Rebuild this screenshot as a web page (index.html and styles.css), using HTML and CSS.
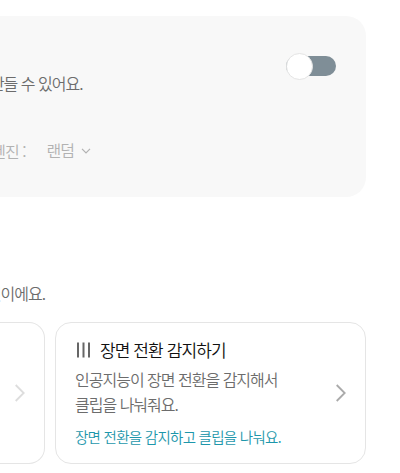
FILE: index.html
```html
<!DOCTYPE html>
<html lang="ko">
<head>
  <meta charset="UTF-8">
  <title>장면 전환 감지하기</title>
  <link rel="stylesheet" href="styles.css">
</head>
<body>

  <section class="panel">
    <div class="panel-text">
      <p class="panel-desc">만들 수 있어요.</p>
      <div class="engine">
        <span class="engine-label">엔진 :</span>
        <span class="engine-value">랜덤</span>
        <svg class="engine-arrow" width="10" height="6" viewBox="0 0 10 6"><path d="M1 .8l4 4 4-4"/></svg>
      </div>
    </div>
    <div class="toggle"><div class="knob"></div></div>
  </section>

  <p class="notice">것이에요.</p>

  <div class="cards">
    <div class="card card-prev">
      <svg class="arrow" width="11" height="18" viewBox="0 0 11 18"><path d="M1.7 1l8 8-8 8"/></svg>
    </div>
    <div class="card">
      <div class="card-body">
        <h2 class="card-title">
          <svg class="bars" width="15" height="16" viewBox="0 0 15 16"><path d="M3 .5v15M8.5 .5v15M14 .5v15"/></svg>
          장면 전환 감지하기
        </h2>
        <p class="card-desc">인공지능이 장면 전환을 감지해서<br>클립을 나눠줘요.</p>
        <p class="card-note">장면 전환을 감지하고 클립을 나눠요.</p>
      </div>
      <svg class="arrow" width="11" height="18" viewBox="0 0 11 18"><path d="M1.7 1l8 8-8 8"/></svg>
    </div>
  </div>

</body>
</html>
```
FILE: styles.css
```css
* {
  box-sizing: border-box;
}

body {
  margin: 0;
  padding-top: 16px;
  height: 473px;
  overflow: hidden;
  background: #fff;
  font-family: "Noto Sans CJK KR", sans-serif;
  font-weight: 350;
  font-size: 16px;
  letter-spacing: -1px;
  color: #6c6c6c;
}

p, h2 {
  margin: 0;
  white-space: nowrap;
}

.panel {
  display: flex;
  justify-content: space-between;
  align-items: flex-start;
  width: 366px;
  height: 181px;
  padding: 40px 30px 0 0;
  background: #f8f8f8;
  border-radius: 0 20px 20px 0;
}

.panel-text {
  width: 91px;
  padding-top: 14px;
}

.panel-desc {
  display: flex;
  justify-content: flex-end;
  width: 82.5px;
  line-height: 26px;
}

.engine {
  display: flex;
  justify-content: flex-end;
  align-items: center;
  margin-top: 40px;
  line-height: 26px;
  white-space: nowrap;
  color: #b2b2b2;
}

.engine-label {
  padding-top: 2px;
}

.engine-value {
  margin-left: 21px;
}

.engine-arrow {
  flex: none;
  margin: 2px 0 0 7px;
  fill: none;
  stroke: #b2b2b2;
  stroke-width: 1.2;
}

.toggle {
  display: flex;
  align-items: center;
  width: 50px;
  height: 20px;
  border-radius: 10px;
  background: #7f8e97;
}

.knob {
  flex: none;
  width: 27px;
  height: 27px;
  border: 1px solid #e4e4e4;
  border-radius: 50%;
  background: #fff;
}

.notice {
  display: flex;
  justify-content: flex-end;
  width: 45px;
  margin-top: 83px;
  line-height: 26px;
}

.cards {
  display: flex;
  gap: 10px;
  margin-top: 16px;
}

.card {
  display: flex;
  justify-content: space-between;
  align-items: center;
  width: 311px;
  height: 142px;
  padding: 0 19px;
  border: 1px solid #e5e5e5;
  border-radius: 16px;
}

.card-prev {
  justify-content: flex-end;
  width: 45px;
  border-left: 0;
  border-radius: 0 16px 16px 0;
}

.card-title {
  display: flex;
  align-items: center;
  gap: 10px;
  font-size: 17px;
  font-weight: 350;
  line-height: 28px;
  letter-spacing: -0.9px;
  color: #111;
}

.bars {
  fill: none;
  stroke: #666;
  stroke-width: 2;
}

.card-desc {
  margin-top: 3px;
  line-height: 25px;
}

.card-note {
  margin-top: 7px;
  font-size: 14.5px;
  line-height: 26px;
  letter-spacing: -0.72px;
  color: #1d97ab;
}

.arrow {
  flex: none;
  fill: none;
  stroke: #aaa;
  stroke-width: 1.8;
}

.card-prev .arrow {
  stroke: #ddd;
}
```
